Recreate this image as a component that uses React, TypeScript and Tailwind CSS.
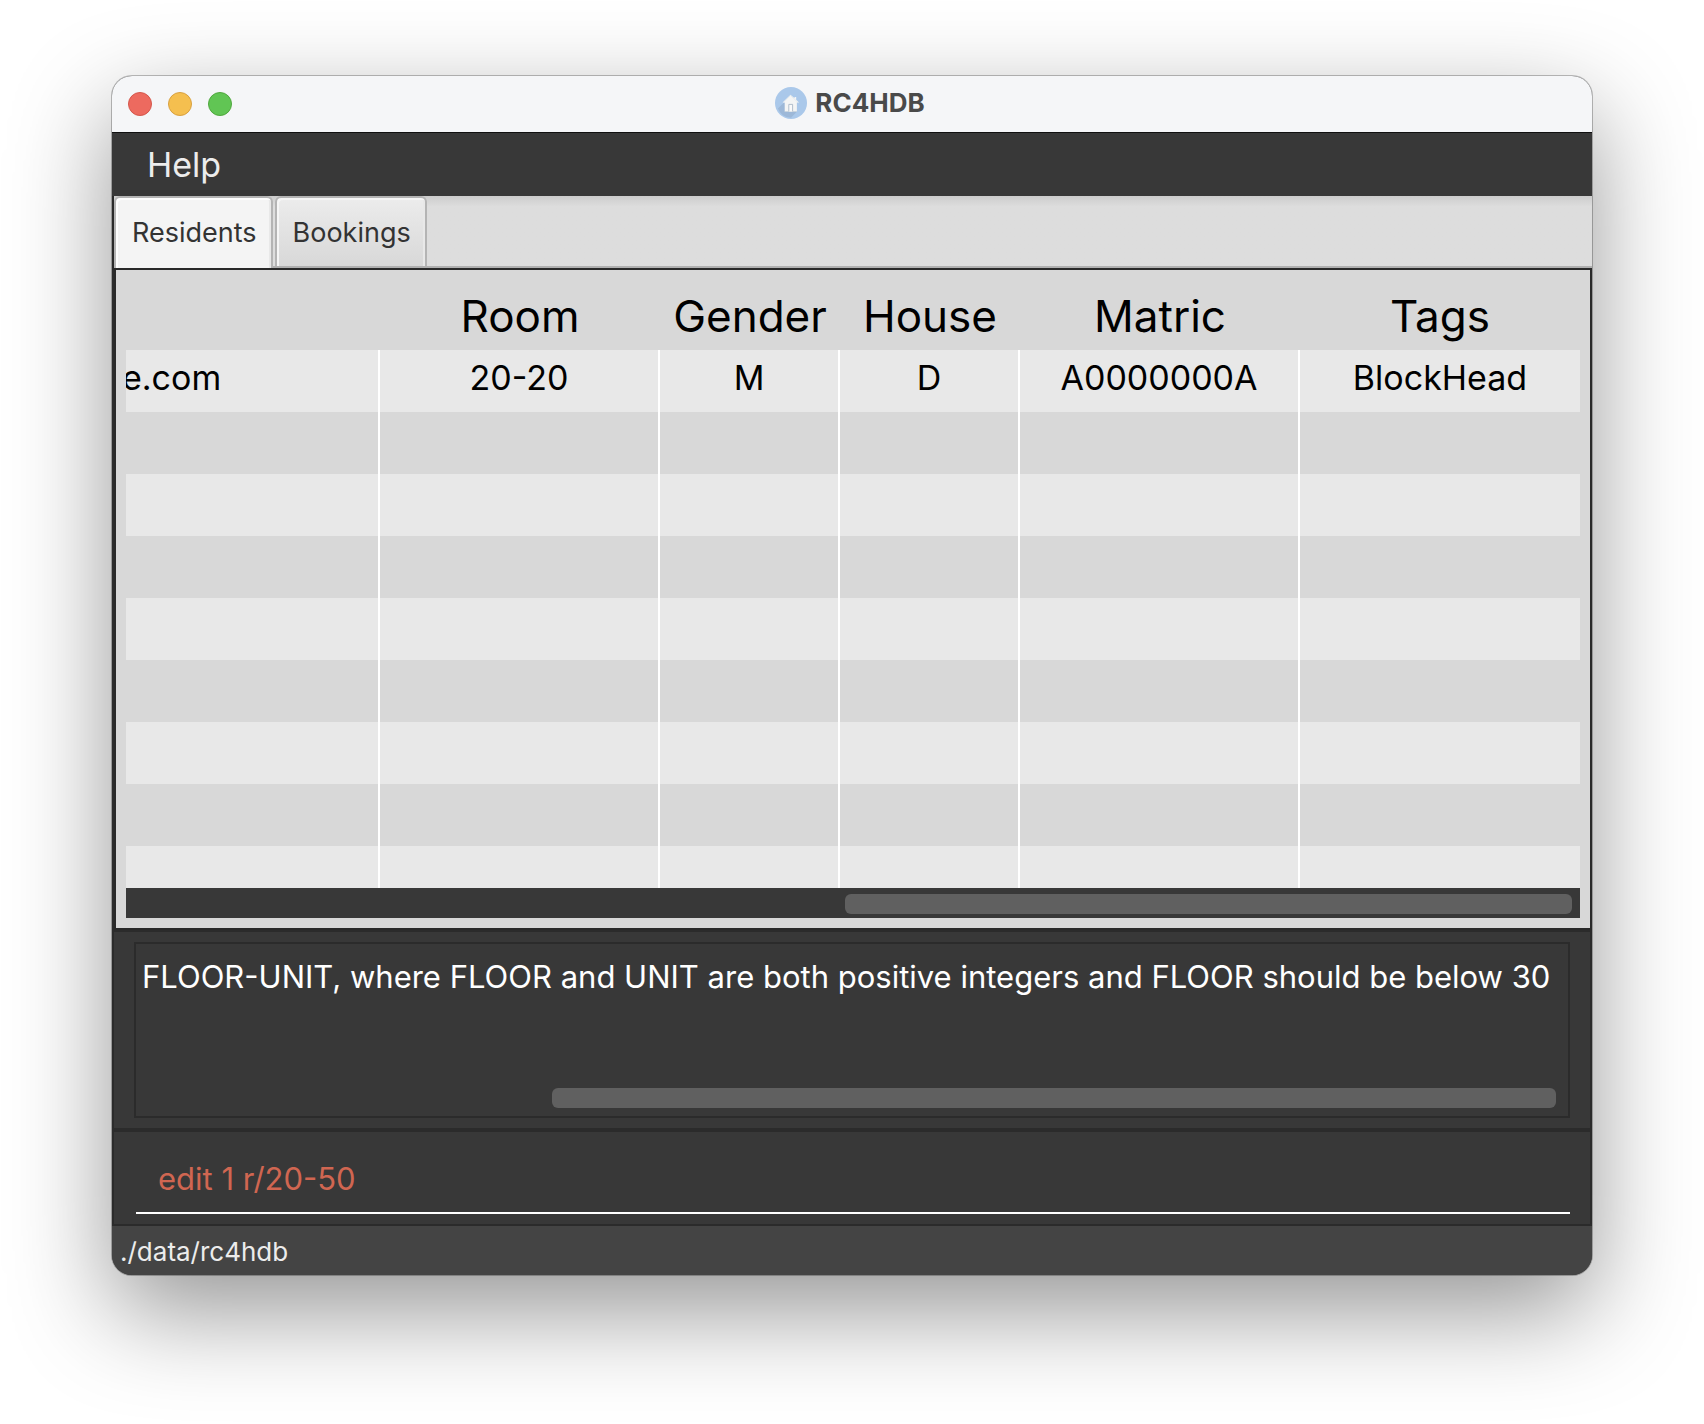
import React, { useState } from "react";

type Resident = {
  email: string;
  room: string;
  gender: string;
  house: string;
  matric: string;
  tags: string;
};

const residents: Resident[] = [
  { email: "e.com", room: "20-20", gender: "M", house: "D", matric: "A0000000A", tags: "BlockHead" },
];

const emptyRows = [1, 2, 3, 4, 5, 6, 7, 8];
const columns = ["Room", "Gender", "House", "Matric", "Tags"];

function HouseLogo() {
  return (
    <svg viewBox="0 0 32 32" className="size-8" aria-hidden="true">
      <circle cx="16" cy="16" r="16" fill="#aac8ea" />
      <path d="M8.500 16 2.900 21.500A14.500 14.500 0 0 0 16 30.800L22 24.500V14z" fill="#9db8d8" />
      <path d="M15.500 7.800 7.600 15.600h2.100v9h12.200v-9h2.100l-2.800-2.800V10h-1.700v1.200z" fill="#f4f5f5" />
      <path d="M7.800 15.800l7.700-7.200 8 7.200" fill="none" stroke="#dfe4e8" strokeWidth=".6" />
      <path d="M9.700 24.500h12.200" stroke="#cbd3da" strokeWidth=".6" />
      <path d="M13.800 24.400v-7h3.800v7" fill="#fafafa" stroke="#aab8c6" strokeWidth=".9" />
    </svg>
  );
}

function TitleBar() {
  return (
    <header className="grid h-14 grid-cols-3 items-center bg-[#f5f6f8] px-4">
      <div className="flex gap-4">
        <button aria-label="Close" className="size-6 rounded-full border border-[#d4574c] bg-[#ed6a5f]" />
        <button aria-label="Minimize" className="size-6 rounded-full border border-[#d8a040] bg-[#f5bf4f]" />
        <button aria-label="Zoom" className="size-6 rounded-full border border-[#50a73e] bg-[#61c554]" />
      </div>
      <div className="flex items-center justify-center gap-2 pr-1 pb-0.5">
        <HouseLogo />
        <h1 className="text-[26px] leading-8 font-bold text-[#4a4a4a]">RC4HDB</h1>
      </div>
    </header>
  );
}

function Tabs() {
  const [active, setActive] = useState(0);
  return (
    <div
      role="tablist"
      className="flex h-[72px] gap-0.5 border-b-2 border-[#b0b0b0] bg-linear-to-b from-[#cccccc] to-[#dddddd] to-15%"
    >
      {["Residents", "Bookings"].map((name, i) => (
        <button
          key={name}
          role="tab"
          aria-selected={active === i}
          onClick={() => setActive(i)}
          className={
            active === i
              ? "-mb-0.5 rounded-t-md border-2 border-b-0 border-[#b4b4b4] bg-[#f4f4f4] pr-3.5 pl-4 text-[27px] text-[#333333] shadow-[inset_2px_2px_0_#ffffff,inset_-2px_0_0_#e8e8e8]"
              : "rounded-t-md border-2 border-b-0 border-[#b4b4b4] bg-linear-to-b from-[#ececec] to-[#d8d8d8] pt-0.5 pr-3.5 pl-4 text-[27px] text-[#333333] shadow-[inset_2px_2px_0_#f6f6f6,inset_-2px_0_0_#e8e8e8]"
          }
        >
          {name}
        </button>
      ))}
    </div>
  );
}

function ResidentTable() {
  const cell = "border-r-2 border-white p-0 last:border-r-0";
  return (
    <section className="border-2 border-[#292929] bg-[#d8d8d8] px-2.5 pb-2.5">
      <table className="w-full table-fixed border-separate border-spacing-0 text-center text-black">
        <colgroup>
          <col />
          <col className="w-[280px]" />
          <col className="w-[180px]" />
          <col className="w-[180px]" />
          <col className="w-[280px]" />
          <col className="w-[280px]" />
        </colgroup>
        <thead>
          <tr className="h-20">
            <th aria-label="Email" />
            {columns.map((c) => (
              <th key={c} scope="col" className="p-0 pt-3 text-[44px] leading-[56px] font-normal">
                {c}
              </th>
            ))}
          </tr>
        </thead>
        <tbody className="text-[34px] leading-[56px]">
          {residents.map((r) => (
            <tr key={r.room} className="h-[62px] bg-[#e8e8e8] align-top">
              <td className={cell + " overflow-hidden text-left -indent-1"}>{r.email}</td>
              <td className={cell}>{r.room}</td>
              <td className={cell}>{r.gender}</td>
              <td className={cell}>{r.house}</td>
              <td className={cell}>{r.matric}</td>
              <td className={cell}>{r.tags}</td>
            </tr>
          ))}
          {emptyRows.map((n) => (
            <tr key={n} className="h-[62px] odd:bg-[#e8e8e8] last:h-[42px]">
              {[0, 1, 2, 3, 4, 5].map((c) => (
                <td key={c} className={cell} />
              ))}
            </tr>
          ))}
        </tbody>
      </table>
      <div className="flex h-[30px] justify-end bg-[#383838] pt-1.5">
        <div className="mr-2 h-5 w-1/2 rounded-md bg-[#606060]" />
      </div>
    </section>
  );
}

function ResultDisplay() {
  return (
    <section className="border-2 border-[#2b2b2b] px-5 py-2.5">
      <div className="border-2 border-[#2b2b2b] px-1.5 pt-2.5 pb-2">
        <textarea
          readOnly
          aria-label="Result"
          wrap="off"
          rows={1}
          className="block h-[134px] w-full resize-none overflow-hidden bg-transparent text-[31px] leading-[46px] whitespace-nowrap text-white outline-none"
          defaultValue="FLOOR-UNIT, where FLOOR and UNIT are both positive integers and FLOOR should be below 30"
        />
        <div className="flex justify-end pr-1.5">
          <div className="h-5 w-[71%] rounded-md bg-[#606060]" />
        </div>
      </div>
    </section>
  );
}

export default function App() {
  const [command, setCommand] = useState("edit 1 r/20-50");
  return (
    <div className="min-h-screen overflow-hidden bg-white font-['Inter',sans-serif]">
      <main className="mx-28 my-[76px] overflow-hidden rounded-[20px] bg-[#383838] shadow-[0_0_0_1px_rgba(0,0,0,0.25),0_36px_100px_rgba(0,0,0,0.42)]">
        <TitleBar />
        <nav className="flex h-16 items-center border-t border-[#101010] px-[35px]">
          <button className="text-[34px] leading-10 text-[#ececec]">Help</button>
        </nav>
        <div className="border-l-2 border-[#2b2b2b]">
          <Tabs />
          <ResidentTable />
        </div>
        <ResultDisplay />
        <section className="border-2 border-[#2b2b2b] pt-6 pr-5 pb-2.5 pl-[22px]">
          <input
            aria-label="Command"
            value={command}
            onChange={(e) => setCommand(e.target.value)}
            className="block h-[58px] w-full border-b-2 border-white bg-transparent px-[22px] pb-3 text-[31px] leading-[44px] text-[#d06651] outline-none"
          />
        </section>
        <footer className="h-[49px] bg-[#444444] px-2 pt-1.5 text-[26px] leading-10 text-[#ececec]">./data/rc4hdb</footer>
      </main>
    </div>
  );
}
